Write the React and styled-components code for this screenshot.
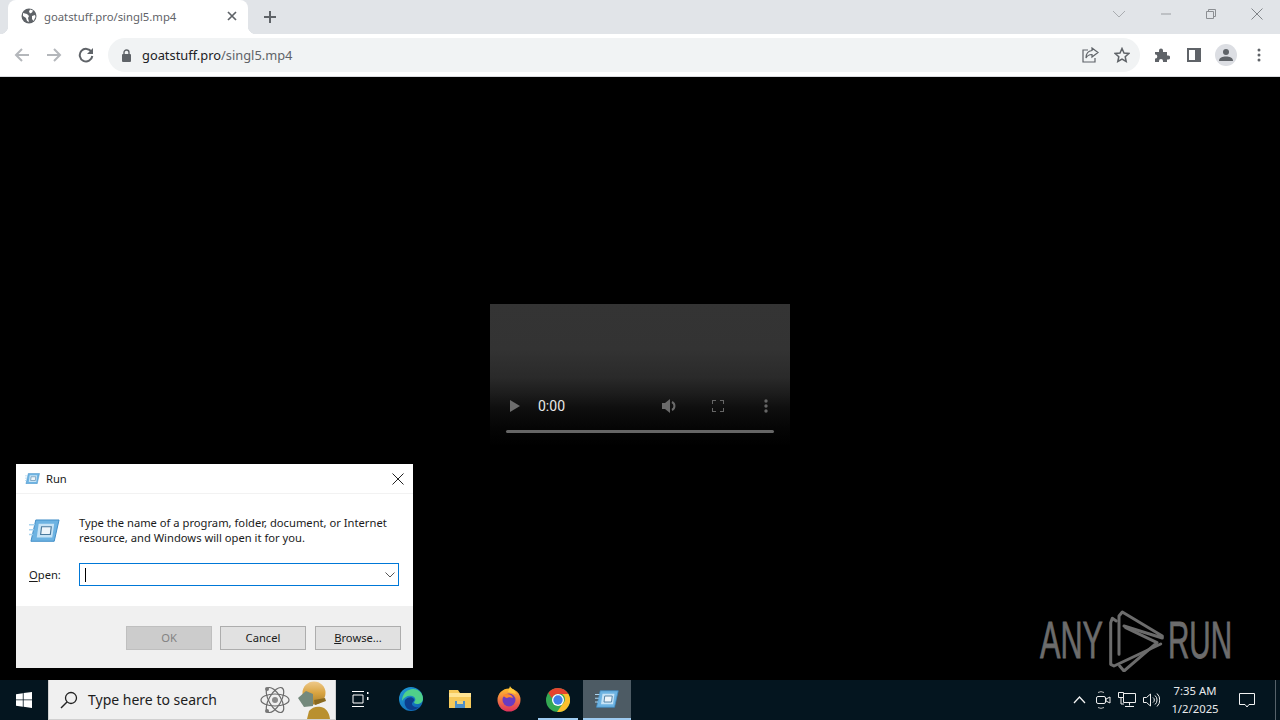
import React from "react";
import styled, { createGlobalStyle } from "styled-components";

const GlobalStyle = createGlobalStyle`
  html, body { margin: 0; padding: 0; background: #000; }
  body { font-family: "Noto Sans", "Open Sans", sans-serif; overflow: hidden; }
  * { box-sizing: border-box; }
`;

const Screen = styled.div`
  position: relative;
  width: 1280px;
  height: 720px;
  display: flex;
  flex-direction: column;
  overflow: hidden;
`;

const Icon = styled.svg`
  flex: none;
  margin-left: ${(p) => p.$ml || 0}px;
  margin-right: ${(p) => p.$mr || 0}px;
  margin-bottom: ${(p) => p.$mb || 0}px;
  margin-top: ${(p) => p.$mt || 0}px;
`;

/* browser chrome */
const TabStrip = styled.div`
  height: 34px;
  background: #e1e4e8;
  display: flex;
  align-items: flex-end;
  padding-left: 8px;
`;
const Tab = styled.div`
  position: relative;
  width: 240px;
  height: 34px;
  background: #fff;
  border-radius: 8px 8px 0 0;
  display: flex;
  align-items: center;
  padding: 0 11px 2px 13px;
  &::before,
  &::after {
    content: "";
    position: absolute;
    bottom: 0;
    width: 8px;
    height: 8px;
  }
  &::before {
    left: -8px;
    background: radial-gradient(circle at 0 0, transparent 8px, #fff 8.5px);
  }
  &::after {
    right: -8px;
    background: radial-gradient(circle at 100% 0, transparent 8px, #fff 8.5px);
  }
`;
const TabTitle = styled.span`
  flex: 1;
  margin-left: 7px;
  font-size: 11.3px;
  color: #5f6368;
  white-space: nowrap;
`;
const NewTab = styled.div`
  margin-left: 15px;
  height: 34px;
  display: flex;
  align-items: center;
`;
const WindowControls = styled.div`
  margin-left: auto;
  height: 34px;
  display: flex;
  align-items: center;
  gap: 35px;
  padding: 0 17px 6px 0;
`;
const Toolbar = styled.div`
  height: 43px;
  background: #fff;
  display: flex;
  align-items: center;
  padding: 0 12px 0 13px;
  border-bottom: 1px solid #dadce0;
`;
const NavButtons = styled.div`
  display: flex;
  align-items: center;
  gap: 14px;
  width: 95px;
`;
const Omnibox = styled.div`
  width: 1032px;
  height: 34px;
  border-radius: 17px;
  background: #f1f3f4;
  display: flex;
  align-items: center;
  padding: 0 10px 0 13px;
`;
const Url = styled.span`
  margin-left: 10px;
  font-size: 12.85px;
  color: #202124;
  flex: 1;
  white-space: nowrap;
`;
const UrlPath = styled.span`
  color: #5f6368;
`;
const OmniIcons = styled.div`
  display: flex;
  align-items: center;
  gap: 15px;
`;
const ToolIcons = styled.div`
  margin-left: 14px;
  display: flex;
  align-items: center;
  gap: 14px;
`;
const Avatar = styled.div`
  width: 22px;
  height: 22px;
  border-radius: 50%;
  background: #dcdee3;
  display: flex;
  align-items: center;
  justify-content: center;
`;

/* page */
const Page = styled.main`
  flex: 1;
  background: #000;
  display: flex;
  align-items: center;
  justify-content: center;
`;
const Video = styled.div`
  width: 300px;
  height: 150px;
  background: linear-gradient(#343434 0%, #333 30%, #2a2a2a 49%, #1c1c1c 60%, #0f0f0f 69%, #050505 83%, #000 95%);
  display: flex;
  flex-direction: column;
  justify-content: flex-end;
  padding: 0 16px 21px;
`;
const VideoControls = styled.div`
  display: flex;
  align-items: center;
  height: 24px;
  margin-bottom: 12px;
`;
const VideoTime = styled.span`
  font-family: Roboto, sans-serif;
  font-size: 14px;
  color: #e8e8e8;
  margin-left: 18px;
  width: 124px;
`;
const VideoIcons = styled.div`
  display: flex;
  align-items: center;
  gap: 34px;
`;
const Timeline = styled.div`
  height: 3px;
  border-radius: 2px;
  background: #666;
`;

/* run dialog */
const Dialog = styled.div`
  position: absolute;
  left: 16px;
  top: 464px;
  width: 397px;
  height: 204px;
  background: #fff;
  display: flex;
  flex-direction: column;
  font-size: 11.2px;
  color: #1a1a1a;
`;
const TitleBar = styled.div`
  height: 30px;
  display: flex;
  align-items: center;
  padding: 0 9px;
  border-bottom: 1px solid #f2f2f2;
`;
const TitleText = styled.span`
  margin-left: 6px;
  flex: 1;
`;
const DialogBody = styled.div`
  flex: 1;
  padding: 21px 14px 0 13px;
`;
const Intro = styled.div`
  display: flex;
  gap: 19px;
  line-height: 15px;
  white-space: nowrap;
`;
const IntroIcon = styled.div`
  flex: none;
  width: 31px;
  padding-top: 4px;
`;
const OpenRow = styled.div`
  display: flex;
  align-items: center;
  margin-top: 18px;
`;
const OpenLabel = styled.label`
  width: 50px;
  u { text-underline-offset: 2px; }
`;
const OpenInput = styled.div`
  width: 320px;
  height: 23px;
  border: 1px solid #0078d7;
  display: flex;
  align-items: center;
  justify-content: space-between;
  padding: 0 3px 0 5px;
`;
const Caret = styled.div`
  width: 1px;
  height: 14px;
  background: #000;
`;
const DialogFooter = styled.div`
  height: 62px;
  background: #f0f0f0;
  display: flex;
  justify-content: flex-end;
  gap: 8px;
  padding: 20px 12px 0 0;
`;
const DialogButton = styled.div`
  width: 86px;
  height: 24px;
  padding-bottom: 1px;
  background: ${(p) => (p.$disabled ? "#cccccc" : "#e1e1e1")};
  border: 1px solid ${(p) => (p.$disabled ? "#bfbfbf" : "#adadad")};
  color: ${(p) => (p.$disabled ? "#838383" : "#1a1a1a")};
  display: flex;
  align-items: center;
  justify-content: center;
  &:last-child {
    margin-left: 1px;
  }
`;

/* watermark */
const Watermark = styled.div`
  position: absolute;
  left: 1040px;
  top: 610px;
  display: flex;
  align-items: center;
  color: #6c6c6c;
`;
const WatermarkWord = styled.span`
  font-family: "Liberation Sans", sans-serif;
  font-size: 51px;
  line-height: 62px;
  display: inline-block;
  -webkit-text-stroke: 0.8px #6c6c6c;
  transform: scaleX(${(p) => p.$scale});
  transform-origin: left center;
  width: ${(p) => p.$width}px;
  white-space: nowrap;
`;

/* taskbar */
const Taskbar = styled.footer`
  height: 40px;
  background: #04151f;
  display: flex;
  align-items: stretch;
  color: #fff;
`;
const StartButton = styled.div`
  width: 48px;
  display: flex;
  align-items: center;
  justify-content: center;
`;
const SearchBox = styled.div`
  width: 288px;
  background: #f0f0f0;
  border: 1px solid #d0d0d0;
  border-width: 0 1px 1px;
  display: flex;
  align-items: center;
  padding: 0 1px 0 11px;
  color: #1d1d1d;
  font-size: 14px;
`;
const SearchText = styled.span`
  margin-left: 10px;
  flex: 1;
`;
const Doodle = styled.div`
  display: flex;
  align-items: flex-end;
  gap: 6px;
  height: 39px;
`;
const TaskItem = styled.div`
  width: ${(p) => p.$width || 49}px;
  margin-left: ${(p) => p.$ml || 0}px;
  display: flex;
  align-items: center;
  justify-content: center;
  background: ${(p) => (p.$active ? "#4d5b64" : "transparent")};
  border-bottom: 2px solid ${(p) => (p.$open ? "#9ecbf0" : "transparent")};
`;
const ChromeItem = styled(TaskItem)`
  border-bottom: 0;
  position: relative;
  &::after {
    content: "";
    position: absolute;
    left: 5px;
    right: 4px;
    bottom: 0;
    height: 2px;
    background: #9ecbf0;
  }
`;
const Tray = styled.div`
  margin-left: auto;
  display: flex;
  align-items: center;
`;
const TrayIcon = styled.div`
  width: 24px;
  display: flex;
  align-items: center;
  justify-content: center;
`;
const Clock = styled.div`
  margin-left: 2px;
  width: 60px;
  font-size: 11.3px;
  line-height: 18px;
  text-align: center;
  color: #e8eaec;
`;
const Notify = styled.div`
  width: 44px;
  display: flex;
  align-items: center;
  justify-content: center;
`;
const ShowDesktop = styled.div`
  width: 5px;
  height: 100%;
  margin-left: 6px;
  border-left: 1px solid #56626a;
`;

const RunGlyph = ({ size = 16 }) => (
  <svg width={size} height={size * 0.75} viewBox="0 0 32 24">
    <path d="M7 1H31L26 23H2Z" fill="#6db3e2" stroke="#3f8cc6" />
    <path d="M10 5H26L24 19H8Z" fill="#c6e3f6" />
    <path d="M13 8H23L22 16H12Z" fill="#eef5fa" stroke="#4a7a9e" strokeWidth="1.2" />
    <path d="M0 6H6M0 11H5M0 16H4" stroke="#a9d3ee" strokeWidth="1.5" />
  </svg>
);

export default function App() {
  return (
    <>
      <GlobalStyle />
      <Screen>
        <TabStrip>
          <Tab>
            <svg width="16" height="16" viewBox="0 0 16 16">
              <circle cx="8" cy="8" r="7.5" fill="#5f6368" />
              <path d="M2 5l4 1 2 2-1 2 1 4-2-1-1-3-3-2zM9 1.5l3 1-1 2-2 1-1-2zM11 8l3-1 .5 2-2 4-1.500-2z" fill="#fff" />
            </svg>
            <TabTitle>goatstuff.pro/singl5.mp4</TabTitle>
            <svg width="10" height="10" viewBox="0 0 10 10">
              <path d="M1 1l8 8M9 1l-8 8" stroke="#5f6368" strokeWidth="1.7" />
            </svg>
          </Tab>
          <NewTab>
            <svg width="14" height="14" viewBox="0 0 14 14">
              <path d="M7 1v12M1 7h12" stroke="#5f6368" strokeWidth="2" />
            </svg>
          </NewTab>
          <WindowControls>
            <svg width="14" height="8" viewBox="0 0 14 8">
              <path d="M1 1l6 6 6-6" fill="none" stroke="#a9acb0" strokeWidth="1" />
            </svg>
            <svg width="10" height="2" viewBox="0 0 10 2">
              <path d="M0 1h10" stroke="#9a9da1" />
            </svg>
            <svg width="10" height="10" viewBox="0 0 10 10">
              <path d="M.5 2.500h7v7h-7zM2.500 2.500v-2h7v7h-2" fill="none" stroke="#8b8e92" />
            </svg>
            <svg width="12" height="12" viewBox="0 0 12 12">
              <path d="M.5.500l11 11M11.500.500l-11 11" stroke="#808488" />
            </svg>
          </WindowControls>
        </TabStrip>
        <Toolbar>
          <NavButtons>
            <svg width="18" height="16" viewBox="0 0 18 16">
              <path d="M16 8H3M9 2L3 8l6 6" fill="none" stroke="#b4b7bb" strokeWidth="2" />
            </svg>
            <svg width="18" height="16" viewBox="0 0 18 16">
              <path d="M2 8h13M9 2l6 6-6 6" fill="none" stroke="#b4b7bb" strokeWidth="2" />
            </svg>
            <Icon width="16" height="16" viewBox="0 0 16 16" $ml={1}>
              <path d="M13.500 5A6.300 6.300 0 1 0 14.300 9" fill="none" stroke="#5f6368" strokeWidth="2" />
              <path d="M15 1v6H9z" fill="#5f6368" />
            </Icon>
          </NavButtons>
          <Omnibox>
            <svg width="11" height="13" viewBox="0 0 11 13">
              <rect x="1" y="5" width="9" height="8" rx="1" fill="#5f6368" />
              <path d="M3 5.500V3.500a2.500 2.500 0 0 1 5 0v2" fill="none" stroke="#5f6368" strokeWidth="1.4" />
            </svg>
            <Url>
              goatstuff.pro<UrlPath>/singl5.mp4</UrlPath>
            </Url>
            <OmniIcons>
              <svg width="18" height="16" viewBox="0 0 18 16">
                <path d="M7 3H2v12h12v-4" fill="none" stroke="#5f6368" strokeWidth="1.2" />
                <path d="M11 1l6 4.500-6 4.500V7.500C8 7.500 6 9 5 11c0-4 2-7 6-7.500z" fill="none" stroke="#5f6368" strokeWidth="1.2" />
              </svg>
              <svg width="16" height="16" viewBox="0 0 16 16">
                <path d="M8 1.500l2 4.500 4.800.500-3.600 3.200 1 4.800L8 12.200l-4.200 2.300 1-4.800L1.200 6.500 6 6z" fill="none" stroke="#5f6368" strokeWidth="1.500" />
              </svg>
            </OmniIcons>
          </Omnibox>
          <ToolIcons>
            <svg width="16" height="16" viewBox="0 0 16 16">
              <path d="M1 5h4V3.500a2 2 0 0 1 4 0V5h4v3.500h1.200a2 2 0 0 1 0 4H13V15h-4v-1a2 2 0 0 0-4 0v1H1v-3.500h1a2.200 2.200 0 0 0 0-4H1z" fill="#5f6368" />
            </svg>
            <Icon width="14" height="14" viewBox="0 0 14 14" $ml={3}>
              <path d="M0 0h14v14H0zM2 2v10h6V2z" fill="#5f6368" fillRule="evenodd" />
            </Icon>
            <Avatar>
              <svg width="14" height="14" viewBox="0 0 14 14">
                <circle cx="7" cy="4" r="3" fill="#5f6368" />
                <path d="M0 13c0-3.500 3.500-4.500 7-4.500s7 1 7 4.500z" fill="#5f6368" />
              </svg>
            </Avatar>
            <Icon width="4" height="14" viewBox="0 0 4 14" $ml={6}>
              <circle cx="2" cy="2" r="1.500" fill="#5f6368" />
              <circle cx="2" cy="7" r="1.500" fill="#5f6368" />
              <circle cx="2" cy="12" r="1.500" fill="#5f6368" />
            </Icon>
          </ToolIcons>
        </Toolbar>

        <Page>
          <Video>
            <VideoControls>
              <Icon width="10" height="12" viewBox="0 0 10 12" $ml={4}>
                <path d="M0 0l10 6-10 6z" fill="#6e6e6e" />
              </Icon>
              <VideoTime>0:00</VideoTime>
              <VideoIcons>
                <svg width="16" height="16" viewBox="0 0 16 16">
                  <path d="M0 5h3l5-4v14l-5-4H0z" fill="#6a6a6a" />
                  <path d="M10 4a4.500 4.500 0 0 1 0 8" fill="none" stroke="#6a6a6a" strokeWidth="2" />
                </svg>
                <svg width="12" height="12" viewBox="0 0 12 12">
                  <path d="M0 4V0h4M8 0h4v4M12 8v4H8M4 12H0V8" fill="none" stroke="#666" strokeWidth="2" />
                </svg>
                <Icon width="4" height="14" viewBox="0 0 4 14" $ml={6}>
                  <circle cx="2" cy="2" r="1.700" fill="#666" />
                  <circle cx="2" cy="7" r="1.700" fill="#666" />
                  <circle cx="2" cy="12" r="1.700" fill="#666" />
                </Icon>
              </VideoIcons>
            </VideoControls>
            <Timeline />
          </Video>
        </Page>

        <Dialog>
          <TitleBar>
            <RunGlyph size={15} />
            <TitleText>Run</TitleText>
            <svg width="12" height="12" viewBox="0 0 12 12">
              <path d="M.5.500l11 11M11.500.500l-11 11" stroke="#222" />
            </svg>
          </TitleBar>
          <DialogBody>
            <Intro>
              <IntroIcon>
                <RunGlyph size={31} />
              </IntroIcon>
              <span>
                Type the name of a program, folder, document, or Internet
                <br />
                resource, and Windows will open it for you.
              </span>
            </Intro>
            <OpenRow>
              <OpenLabel>
                <u>O</u>pen:
              </OpenLabel>
              <OpenInput>
                <Caret />
                <svg width="10" height="6" viewBox="0 0 10 6">
                  <path d="M.5.500L5 5 9.500.500" fill="none" stroke="#555" />
                </svg>
              </OpenInput>
            </OpenRow>
          </DialogBody>
          <DialogFooter>
            <DialogButton $disabled>OK</DialogButton>
            <DialogButton>Cancel</DialogButton>
            <DialogButton>
              <span>
                <u>B</u>rowse...
              </span>
            </DialogButton>
          </DialogFooter>
        </Dialog>

        <Watermark>
          <WatermarkWord $width={62} $scale={0.6}>ANY</WatermarkWord>
          <Icon width="58" height="62" viewBox="0 0 58 62" $ml={5} $mr={3}>
            <g fill="none" stroke="#6c6c6c" strokeWidth="3" strokeLinejoin="round" strokeLinecap="round">
              <path d="M9.300 11L5.300 8.300 3.700 12.700V54.300L7 56 53.700 34" />
              <path d="M12 44.300V6L15.300 2 55.300 26V28L17 16" />
              <path d="M18.700 17.700L50 32.700 17 61 12.700 56" />
            </g>
          </Icon>
          <WatermarkWord $width={62} $scale={0.58}>RUN</WatermarkWord>
        </Watermark>

        <Taskbar>
          <StartButton>
            <svg width="16" height="16" viewBox="0 0 16 16">
              <path d="M0 2.200l6.800-1v6.300H0zM7.600 1.100L16 0v7.500H7.600zM0 8.300h6.800v6.400L0 13.800zM7.600 8.300H16V16l-8.400-1.200z" fill="#fff" />
            </svg>
          </StartButton>
          <SearchBox>
            <svg width="18" height="18" viewBox="0 0 18 18">
              <circle cx="11" cy="7" r="5.500" fill="none" stroke="#222" strokeWidth="1.300" />
              <path d="M7 11l-6 6" stroke="#222" strokeWidth="1.500" />
            </svg>
            <SearchText>Type here to search</SearchText>
            <Doodle>
              <Icon width="30" height="30" viewBox="0 0 30 30" $mb={4}>
                <g fill="none" stroke="#6a6a6a" strokeWidth="1.200">
                  <ellipse cx="15" cy="15" rx="14" ry="6" />
                  <ellipse cx="15" cy="15" rx="14" ry="6" transform="rotate(60 15 15)" />
                  <ellipse cx="15" cy="15" rx="14" ry="6" transform="rotate(120 15 15)" />
                </g>
                <circle cx="15" cy="15" r="3" fill="#8a8a8a" />
                <circle cx="7" cy="4" r="2" fill="#777" />
                <circle cx="7" cy="26" r="2" fill="#777" />
              </Icon>
              <svg width="38" height="39" viewBox="0 0 38 39">
                <defs>
                  <linearGradient id="robot" x1="0" y1="0" x2="0" y2="1">
                    <stop offset="0" stopColor="#eec98a" />
                    <stop offset="0.5" stopColor="#d9a441" />
                    <stop offset="1" stopColor="#a87f2c" />
                  </linearGradient>
                </defs>
                <path d="M11 39l2-8c3-4 8-5 12-4 5 1 8 5 9 12z" fill="#b9902f" />
                <circle cx="18" cy="13" r="11.500" fill="url(#robot)" />
                <path d="M2 18l8-7 7 3v12l-9 1z" fill="#74897c" />
                <path d="M18 20l11-2 1 3-11 4z" fill="#8a6a20" />
              </svg>
            </Doodle>
          </SearchBox>
          <TaskItem $width={48}>
            <svg width="18" height="16" viewBox="0 0 18 16">
              <path d="M1 .500h12M1 15.500h12M2 4h10v8H2z" fill="none" stroke="#fff" strokeWidth="1" />
              <path d="M16 1h1.500v2H16zM16 6h1.500v3H16z" fill="#fff" />
            </svg>
          </TaskItem>
          <TaskItem $ml={2}>
            <svg width="24" height="24" viewBox="0 0 24 24">
              <defs>
                <linearGradient id="edge" x1="0" y1="0" x2="1" y2="1">
                  <stop offset="0" stopColor="#1f9bd6" />
                  <stop offset="1" stopColor="#0d5fb0" />
                </linearGradient>
              </defs>
              <circle cx="12" cy="12" r="12" fill="url(#edge)" />
              <path d="M10 3c7-3 14 2 14 9 0 3-3 5-6 5-2 0-3-1-3-2 2-1 2-5-2-6-4-1-8 1-10 5 0-5 3-10 7-11z" fill="#4fd08a" />
              <path d="M6 13c2-3 7-4 9-1 1 2-2 3-2 5s4 4 7 3c-3 3-8 4-11 2-3-2-4-6-3-9z" fill="#0c3f8f" />
            </svg>
          </TaskItem>
          <TaskItem>
            <svg width="22" height="18" viewBox="0 0 22 18">
              <path d="M0 0h9l2 3h11v15H0z" fill="#f6c95a" />
              <path d="M0 3h22v4H0z" fill="#ffe493" />
              <path d="M6 11h10v7H6z" fill="#4d8fc9" />
              <path d="M8 11h6v3H8z" fill="#f0d27a" />
            </svg>
          </TaskItem>
          <TaskItem>
            <svg width="24" height="26" viewBox="0 0 24 26">
              <defs>
                <linearGradient id="fox" x1="0" y1="0" x2="0" y2="1">
                  <stop offset="0" stopColor="#ffbd2e" />
                  <stop offset="1" stopColor="#e0315c" />
                </linearGradient>
              </defs>
              <circle cx="12" cy="14" r="11.500" fill="url(#fox)" />
              <path d="M13 0c1 3 5 3 6 8l-8-2z" fill="#ffc93c" />
              <circle cx="12" cy="14" r="6.500" fill="#6a3bc0" />
              <path d="M6 9c4-2 9-1 10 3-2-1-5-1-6 0-1 0-3-1-4-3z" fill="#ff8a2a" />
            </svg>
          </TaskItem>
          <ChromeItem>
            <svg width="24" height="24" viewBox="0 0 24 24">
              <circle cx="12" cy="12" r="12" fill="#34a853" />
              <path d="M12 0a12 12 0 0 1 10.400 6H12a6 6 0 0 0-5.800 4.500L2.300 5A12 12 0 0 1 12 0z" fill="#e5432f" />
              <path d="M22.400 6A12 12 0 0 1 11 24l5.500-8A6 6 0 0 0 16 6z" fill="#fbc02d" />
              <circle cx="12" cy="12" r="6" fill="#fff" />
              <circle cx="12" cy="12" r="4.700" fill="#3f7fe8" />
            </svg>
          </ChromeItem>
          <TaskItem $active $open $width={48} $ml={1}>
            <RunGlyph size={24} />
          </TaskItem>
          <Tray>
            <TrayIcon>
              <svg width="13" height="8" viewBox="0 0 13 8">
                <path d="M1 7l5.500-6L12 7" fill="none" stroke="#f2f2f2" strokeWidth="1.300" />
              </svg>
            </TrayIcon>
            <TrayIcon>
              <svg width="16" height="18" viewBox="0 0 16 18">
                <path d="M3 1.500a6 6 0 0 1 6 0M3 16.500a6 6 0 0 0 6 0" fill="none" stroke="#bbb" />
                <rect x="1.500" y="5.500" width="9" height="7" rx="1.500" fill="none" stroke="#eee" />
                <path d="M11 8l4-2v6l-4-2z" fill="none" stroke="#eee" />
              </svg>
            </TrayIcon>
            <TrayIcon>
              <svg width="18" height="16" viewBox="0 0 18 16">
                <path d="M5.500 1.500h12v9h-12zM11.500 10.500v3M7 14.500h9" fill="none" stroke="#eee" />
                <path d="M.500.500h5v5h-5z" fill="#04151f" stroke="#eee" />
                <path d="M3 6v6h3" fill="none" stroke="#eee" />
              </svg>
            </TrayIcon>
            <TrayIcon>
              <svg width="17" height="14" viewBox="0 0 17 14">
                <path d="M.500 4.500h3l4-3.500v12l-4-3.500h-3z" fill="none" stroke="#eee" />
                <path d="M10 4.500a3 3 0 0 1 0 5M12 2.500a6 6 0 0 1 0 9M14 .500a9 9 0 0 1 0 13" fill="none" stroke="#eee" />
              </svg>
            </TrayIcon>
            <Clock>
              7:35 AM
              <br />
              1/2/2025
            </Clock>
            <Notify>
              <svg width="16" height="15" viewBox="0 0 16 15">
                <path d="M.500.500h15v11H10l-2 2.500-2-2.500H.500z" fill="none" stroke="#f2f2f2" />
              </svg>
            </Notify>
            <ShowDesktop />
          </Tray>
        </Taskbar>
      </Screen>
    </>
  );
}
